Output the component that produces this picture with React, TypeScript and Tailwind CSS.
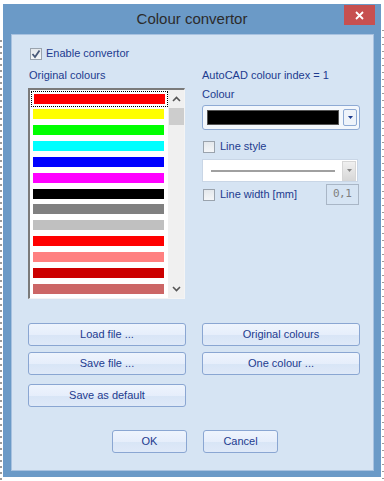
import React from "react";

const colors = [
  "#ff0000", "#ffff00", "#00ff00", "#00ffff", "#0000ff", "#ff00ff", "#000000",
  "#808080", "#c0c0c0", "#ff0000", "#ff8080", "#cc0000", "#cc6666",
];

const font = { fontFamily: '"Liberation Sans", Arial, sans-serif' };

function Check({ checked }: { checked?: boolean }) {
  return (
    <div className="w-[12px] h-[12px] border border-[#9aa3ad] bg-gradient-to-b from-[#e4e8ec] to-[#f4f6f8] flex items-center justify-center shrink-0">
      {checked && (
        <svg width="10" height="10" viewBox="0 0 10 10">
          <path d="M1.5 5 L4 8 L8.5 1.5" stroke="#4a5a78" strokeWidth="1.8" fill="none" />
        </svg>
      )}
    </div>
  );
}

function Btn({ children, w }: { children: React.ReactNode; w: string }) {
  return (
    <div
      className={`${w} h-[23px] rounded-[3px] border border-[#8aa6d2] flex items-center justify-center text-[11px] text-[#1d3b8f] bg-[linear-gradient(#eef4fd_0%,#e6eefb_50%,#d8e5f6_51%,#dfe9f8_100%)]`}
    >
      {children}
    </div>
  );
}

export default function App() {
  return (
    <div className="w-[384px] h-[481px] bg-white relative overflow-hidden" style={font}>
      <div className="absolute left-0 top-[40px] w-[2px] h-[440px] bg-[repeating-linear-gradient(#9a9a9a_0px,#9a9a9a_2px,#ffffff_2px,#ffffff_6px)]" />
      <div className="absolute right-0 top-[30px] w-[2px] h-[450px] bg-[repeating-linear-gradient(#9a9a9a_0px,#9a9a9a_1px,#ffffff_1px,#ffffff_7px)]" />
      <div className="absolute left-[3px] top-[4px] w-[378px] h-[473px] bg-[#6b9ac7] flex flex-col">
        <div className="h-[30px] relative flex items-center justify-center">
          <span className="text-[15px] text-[#2b2b2b] mt-[1px]">Colour convertor</span>
          <div className="absolute right-[6px] top-[1px] w-[31px] h-[20px] bg-[#c75050] flex items-center justify-center">
            <svg width="9" height="9" viewBox="0 0 9 9">
              <path d="M1 1 L8 8 M8 1 L1 8" stroke="#fff" strokeWidth="1.8" />
            </svg>
          </div>
        </div>
        <div className="ml-[8px] mr-[7px] h-[437px] bg-[#d6e4f3] border border-[#a8c2e0] text-[11px] text-[#1d3b8f]">
          <div className="flex items-center gap-[4px] ml-[18px] mt-[12px] h-[13px]">
            <Check checked />
            <span>Enable convertor</span>
          </div>
          <div className="flex ml-[16px] mt-[7px]">
            <div className="w-[157px]">
              <div className="h-[14px] ml-[1px]">Original colours</div>
              <div className="mt-[7px] h-[211px] border-l-2 border-t-2 border-[#7a7a7a] border-r border-b border-r-[#f4f4f4] border-b-[#f4f4f4] bg-white flex">
                <div className="w-[139px] pl-[1px] pt-[1px] flex flex-col">
                  {colors.map((c, i) => (
                    <div
                      key={i}
                      className={`h-[16px] px-[2px] pt-[2px] ${i === 0 ? "border border-dotted border-black px-[1px] pt-[1px]" : ""}`}
                    >
                      <div className="h-[10px] w-[131px]" style={{ background: c }} />
                    </div>
                  ))}
                </div>
                <div className="w-[16px] ml-auto bg-[#f0f0f0] flex flex-col items-center">
                  <svg className="mt-[6px]" width="9" height="6" viewBox="0 0 9 6">
                    <path d="M1 5 L4.5 1.5 L8 5" stroke="#555" strokeWidth="1.6" fill="none" />
                  </svg>
                  <div className="mt-[6px] w-[15px] h-[17px] bg-[#cdcdcd]" />
                  <svg className="mt-auto mb-[6px]" width="9" height="6" viewBox="0 0 9 6">
                    <path d="M1 1 L4.5 4.5 L8 1" stroke="#555" strokeWidth="1.6" fill="none" />
                  </svg>
                </div>
              </div>
            </div>
            <div className="w-[158px] ml-[17px]">
              <div className="h-[14px]">AutoCAD colour index = 1</div>
              <div className="mt-[5px] h-[14px]">Colour</div>
              <div className="mt-[5px] h-[25px] rounded-[3px] border border-[#8eaad4] bg-[#f3f7fc] flex items-center pl-[4px] pr-[2px]">
                <div className="w-[132px] h-[15px] bg-black border border-[#555]" />
                <div className="ml-auto w-[14px] h-[17px] rounded-[2px] border border-[#8eaad4] bg-[#eef3fa] flex items-center justify-center">
                  <svg width="5" height="3" viewBox="0 0 5 3"><path d="M0 0 H5 L2.5 3 Z" fill="#1d3b8f" /></svg>
                </div>
              </div>
              <div className="flex items-center gap-[5px] mt-[10px] ml-[1px] h-[13px]">
                <Check />
                <span>Line style</span>
              </div>
              <div className="mt-[6px] w-[156px] h-[23px] border border-[#c9d6e6] bg-white flex items-center pl-[8px] pr-[1px]">
                <div className="w-[124px] h-[2px] bg-[#a0a0a0]" />
                <div className="ml-auto w-[14px] h-[20px] bg-gradient-to-b from-[#f0f0f0] to-[#d8d8d8] border border-[#d6d6d6] flex items-center justify-center">
                  <svg width="5" height="3" viewBox="0 0 5 3"><path d="M0 0 H5 L2.5 3 Z" fill="#888" /></svg>
                </div>
              </div>
              <div className="flex items-center mt-[2px] ml-[1px] h-[21px]">
                <div className="flex items-center gap-[5px]">
                  <Check />
                  <span>Line width [mm]</span>
                </div>
                <div className="ml-auto mr-[1px] w-[33px] h-[21px] border border-[#a9b6c6] bg-[#d6e4f3] flex items-center pl-[6px] text-[#808080] text-[11px]" style={{ fontFamily: '"DejaVu Sans Mono", monospace', letterSpacing: "-0.5px" }}>
                  0,1
                </div>
              </div>
            </div>
          </div>
          <div className="ml-[16px] mt-[24px] grid grid-cols-[158px_158px] gap-x-[16px] gap-y-[6px]">
            <Btn w="w-[158px]">Load file ...</Btn>
            <Btn w="w-[158px]">Original colours</Btn>
            <Btn w="w-[158px]">Save file ...</Btn>
            <Btn w="w-[158px]">One colour ...</Btn>
          </div>
          <div className="ml-[16px] mt-[9px]">
            <Btn w="w-[158px]">Save as default</Btn>
          </div>
          <div className="flex gap-[16px] mt-[23px] ml-[100px]">
            <Btn w="w-[75px]">OK</Btn>
            <Btn w="w-[75px]">Cancel</Btn>
          </div>
        </div>
      </div>
    </div>
  );
}
